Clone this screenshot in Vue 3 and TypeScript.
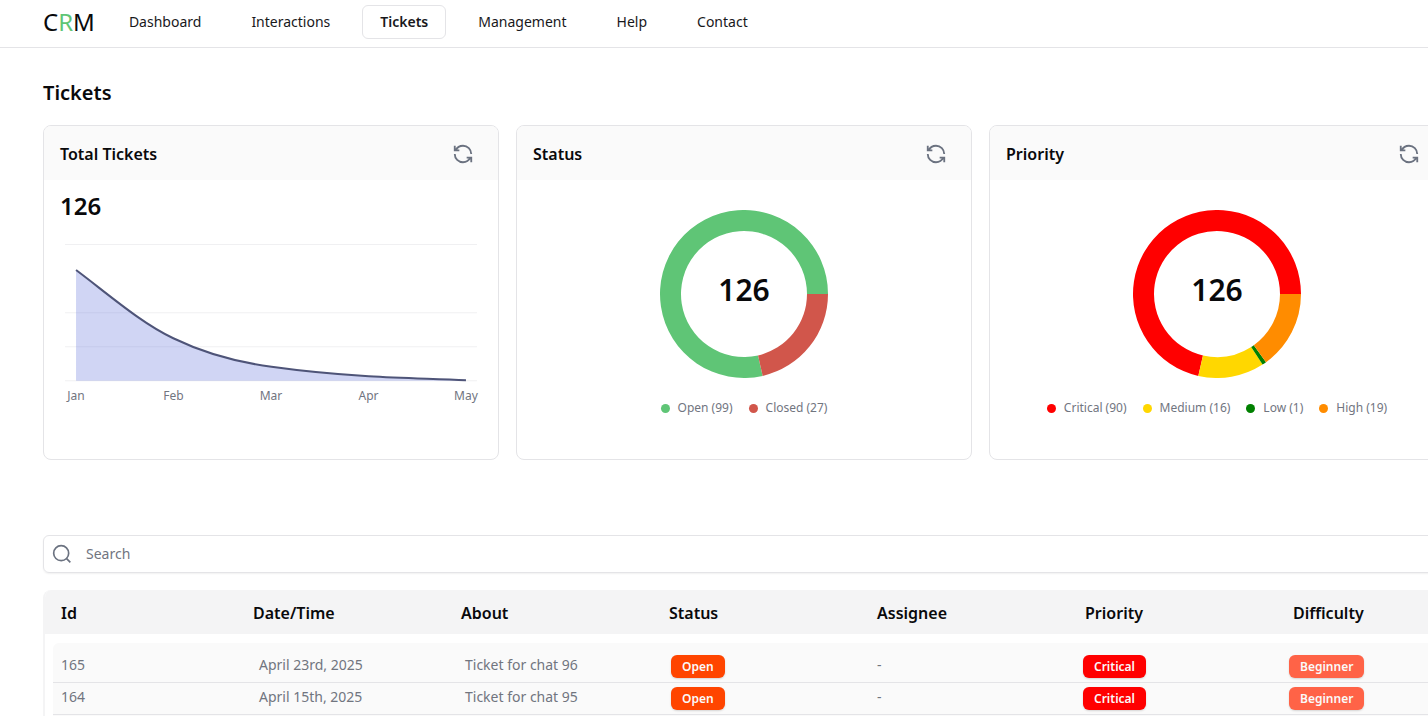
<script setup lang="ts">
interface Slice {
  label: string
  value: number
  color: string
}

interface Ticket {
  id: number
  date: string
  about: string
  status: string
  assignee: string
  priority: string
  difficulty: string
}

const navItems = ['Dashboard', 'Interactions', 'Tickets', 'Management', 'Help', 'Contact']
const activeItem = 'Tickets'

const total = 126

const donuts: { title: string; slices: Slice[] }[] = [
  {
    title: 'Status',
    slices: [
      { label: 'Open', value: 99, color: '#5fc576' },
      { label: 'Closed', value: 27, color: '#d1564b' },
    ],
  },
  {
    title: 'Priority',
    slices: [
      { label: 'Critical', value: 90, color: '#ff0000' },
      { label: 'Medium', value: 16, color: '#ffd700' },
      { label: 'Low', value: 1, color: '#008000' },
      { label: 'High', value: 19, color: '#ff8c00' },
    ],
  },
]

const outer = 84
const inner = 63

function point(angle: number, radius: number): string {
  return `${(outer + radius * Math.cos(angle)).toFixed(2)} ${(outer - radius * Math.sin(angle)).toFixed(2)}`
}

// Slices run counter-clockwise, starting at three o'clock.
function arcs(slices: Slice[]): { d: string; color: string }[] {
  const sum = slices.reduce((acc, s) => acc + s.value, 0)
  let start = 0
  return slices.map((s) => {
    const end = start + (s.value / sum) * Math.PI * 2
    const large = end - start > Math.PI ? 1 : 0
    const d = `M${point(start, outer)}A${outer} ${outer} 0 ${large} 0 ${point(end, outer)}L${point(end, inner)}A${inner} ${inner} 0 ${large} 1 ${point(start, inner)}Z`
    start = end
    return { d, color: s.color }
  })
}

const refreshPath =
  'M21 12a9 9 0 0 0-9-9C8.500 3 5.500 5 4 8M3 3v5h5M3 12a9 9 0 0 0 9 9c3.500 0 6.500-2 8-5M16 16h5v5'

const months = ['Jan', 'Feb', 'Mar', 'Apr', 'May']
const gridLines = [4, 72, 106, 140]
const curve = 'M16 30C48 54 81 83 113 98C146 114 178 122 211 126.500C243 131 276 134 308 136C341 138 373 138.500 405 140'

const columns = ['Id', 'Date/Time', 'About', 'Status', 'Assignee', 'Priority', 'Difficulty']
const tickets: Ticket[] = [
  { id: 165, date: 'April 23rd, 2025', about: 'Ticket for chat 96', status: 'Open', assignee: '-', priority: 'Critical', difficulty: 'Beginner' },
  { id: 164, date: 'April 15th, 2025', about: 'Ticket for chat 95', status: 'Open', assignee: '-', priority: 'Critical', difficulty: 'Beginner' },
]
</script>

<template>
  <div class="page">
    <header class="topbar">
      <a href="#" class="logo">C<span>R</span>M</a>
      <nav class="nav">
        <a v-for="item in navItems" :key="item" href="#" :class="{ active: item === activeItem }">{{ item }}</a>
      </nav>
    </header>

    <main class="content">
      <h1>Tickets</h1>

      <section class="cards">
        <article class="card">
          <header class="card-head">
            <h2>Total Tickets</h2>
            <button type="button" aria-label="Refresh Total Tickets">
              <svg viewBox="0 0 24 24"><path :d="refreshPath" /></svg>
            </button>
          </header>
          <div class="card-body trend">
            <p class="total">{{ total }}</p>
            <svg class="area" viewBox="0 0 420 172" role="img" aria-label="Tickets per month">
              <line v-for="y in gridLines" :key="y" x1="5" :y1="y + 0.5" x2="416" :y2="y + 0.5" />
              <path class="fill" :d="curve + 'V140.500H16Z'" />
              <path class="stroke" :d="curve" />
              <text v-for="(m, i) in months" :key="m" :x="16 + i * 97.250" y="160">{{ m }}</text>
            </svg>
          </div>
        </article>

        <article v-for="donut in donuts" :key="donut.title" class="card">
          <header class="card-head">
            <h2>{{ donut.title }}</h2>
            <button type="button" :aria-label="'Refresh ' + donut.title">
              <svg viewBox="0 0 24 24"><path :d="refreshPath" /></svg>
            </button>
          </header>
          <div class="card-body donut">
            <div class="ring">
              <svg viewBox="0 0 168 168" aria-hidden="true">
                <path v-for="arc in arcs(donut.slices)" :key="arc.color" :d="arc.d" :fill="arc.color" />
              </svg>
              <strong>{{ total }}</strong>
            </div>
            <ul class="legend">
              <li v-for="s in donut.slices" :key="s.label">
                <i :style="{ background: s.color }"></i>{{ s.label }} ({{ s.value }})
              </li>
            </ul>
          </div>
        </article>
      </section>

      <label class="search">
        <svg viewBox="0 0 24 24" aria-hidden="true"><circle cx="11" cy="11" r="9" /><path d="M17.500 17.500L22 22" /></svg>
        <input type="search" placeholder="Search" aria-label="Search" />
      </label>

      <table class="tickets">
        <thead>
          <tr>
            <th v-for="c in columns" :key="c" scope="col">{{ c }}</th>
          </tr>
        </thead>
        <tbody>
          <tr v-for="t in tickets" :key="t.id">
            <td>{{ t.id }}</td>
            <td>{{ t.date }}</td>
            <td>{{ t.about }}</td>
            <td class="tag"><span class="badge open">{{ t.status }}</span></td>
            <td>{{ t.assignee }}</td>
            <td class="tag"><span class="badge critical">{{ t.priority }}</span></td>
            <td class="tag"><span class="badge beginner">{{ t.difficulty }}</span></td>
          </tr>
        </tbody>
      </table>
    </main>
  </div>
</template>

<style>
body {
  margin: 0;
  background: #fff;
}
</style>

<style scoped>
* {
  box-sizing: border-box;
}

.page {
  height: 100vh;
  overflow: hidden;
  font-family: "Noto Sans", "Open Sans", sans-serif;
  font-size: 14px;
  line-height: 20px;
  color: #09090b;
}

.topbar {
  display: flex;
  align-items: center;
  height: 48px;
  padding: 0 43px 4px;
  border-bottom: 1px solid #e4e4e7;
}

.logo {
  font-size: 24px;
  line-height: 32px;
  font-weight: 400;
  color: inherit;
  text-decoration: none;
}

.logo span {
  color: #5fc576;
}

.nav {
  display: flex;
  gap: 14px;
  margin-left: 16px;
}

.nav a {
  padding: 6px 17px;
  border: 1px solid transparent;
  border-radius: 6px;
  color: #18181b;
  text-decoration: none;
}

.nav a.active {
  border-color: #e4e4e7;
  font-weight: 600;
}

.content {
  display: grid;
  grid-template-columns: minmax(1402px, 1fr);
  padding: 30px 43px 0;
}

h1 {
  margin: 0 0 17px;
  font-size: 20px;
  line-height: 30px;
  font-weight: 600;
}

.cards {
  display: grid;
  grid-template-columns: repeat(3, 1fr);
  gap: 17px;
}

.card {
  min-height: 335px;
  border: 1px solid #e4e4e7;
  border-radius: 8px;
  overflow: hidden;
}

.card-head {
  display: flex;
  align-items: center;
  justify-content: space-between;
  height: 54px;
  padding: 1px 24px 0 16px;
  background: #fafafa;
}

.card-head h2 {
  margin: 0;
  font-size: 16px;
  line-height: 24px;
  font-weight: 600;
}

.card-head button {
  display: flex;
  padding: 0;
  border: 0;
  background: none;
}

.card-head svg {
  width: 22px;
  height: 22px;
  fill: none;
  stroke: #6b7280;
  stroke-width: 2;
}

.trend {
  padding: 9px 17px 8px 16px;
}

.total {
  margin: 0 0 17px;
  font-size: 24px;
  line-height: 34px;
  font-weight: 600;
}

.area {
  display: block;
  width: 100%;
}

.area line {
  stroke: #f0f0f2;
}

.area .fill {
  fill: rgba(99, 115, 219, 0.3);
}

.area .stroke {
  fill: none;
  stroke: #4e5478;
  stroke-width: 2;
}

.area text {
  font-size: 12px;
  fill: #71757f;
  text-anchor: middle;
}

.donut {
  display: flex;
  flex-direction: column;
  align-items: center;
  gap: 21px;
  padding-top: 30px;
}

.ring {
  display: grid;
  place-items: center;
}

.ring svg,
.ring strong {
  grid-area: 1 / 1;
}

.ring svg {
  width: 168px;
  height: 168px;
}

.ring strong {
  padding-bottom: 8px;
  font-size: 30px;
  line-height: 36px;
  font-weight: 600;
}

.legend {
  display: flex;
  gap: 16px;
  margin: 0;
  padding: 0;
  list-style: none;
  font-size: 12px;
  line-height: 18px;
  color: #71757f;
}

.legend li {
  display: flex;
  align-items: center;
}

.legend i {
  width: 9px;
  height: 9px;
  margin-right: 8px;
  border-radius: 50%;
}

.search {
  display: flex;
  align-items: center;
  height: 38px;
  margin: 75px 0 17px;
  padding: 0 8px;
  border: 1px solid #e4e4e7;
  border-radius: 6px;
  box-shadow: 0 1px 2px rgba(0, 0, 0, 0.06);
}

.search svg {
  width: 20px;
  height: 20px;
  fill: none;
  stroke: #6b7280;
  stroke-width: 2;
}

.search input {
  flex: 1;
  margin-left: 14px;
  padding: 0;
  border: 0;
  outline: 0;
  background: none;
  font: inherit;
  color: inherit;
}

.search input::placeholder {
  color: #71757f;
  opacity: 1;
}

.tickets {
  display: block;
  min-width: 1460px;
  border: 2px solid #f4f4f5;
  border-bottom: 0;
  border-top: 0;
  border-radius: 8px 8px 0 0;
  overflow: hidden;
}

.tickets thead,
.tickets tbody {
  display: block;
}

.tickets tr {
  display: grid;
  grid-template-columns: repeat(7, 1fr);
  align-items: center;
}

.tickets th,
.tickets td {
  padding: 0;
  text-align: left;
}

.tickets thead tr {
  height: 44px;
  padding-top: 2px;
  background: #f4f4f5;
}

.tickets th {
  font-size: 16px;
  line-height: 24px;
  font-weight: 600;
}

.tickets th:first-child {
  padding-left: 16px;
}

.tickets tbody {
  margin: 9px 6px 0 8px;
  padding: 8px 0;
  border-radius: 6px 6px 0 0;
  background: #fafafa;
  color: #71757f;
}

.tickets tbody tr {
  height: 32px;
  border-bottom: 1px solid #e4e4e7;
}

.tickets td {
  padding-bottom: 3px;
}

.tickets td.tag {
  padding-bottom: 0;
}

.tickets td:first-child {
  padding-left: 8px;
}

.badge {
  display: inline-block;
  padding: 3px 11px;
  border-radius: 6px;
  font-size: 12px;
  line-height: 17px;
  font-weight: 600;
  color: #fafafa;
  box-shadow: 0 1px 2px rgba(0, 0, 0, 0.15);
}

.badge.open {
  background: #ff4500;
}

.badge.critical {
  background: #ff0000;
}

.badge.beginner {
  background: #ff6347;
}
</style>
